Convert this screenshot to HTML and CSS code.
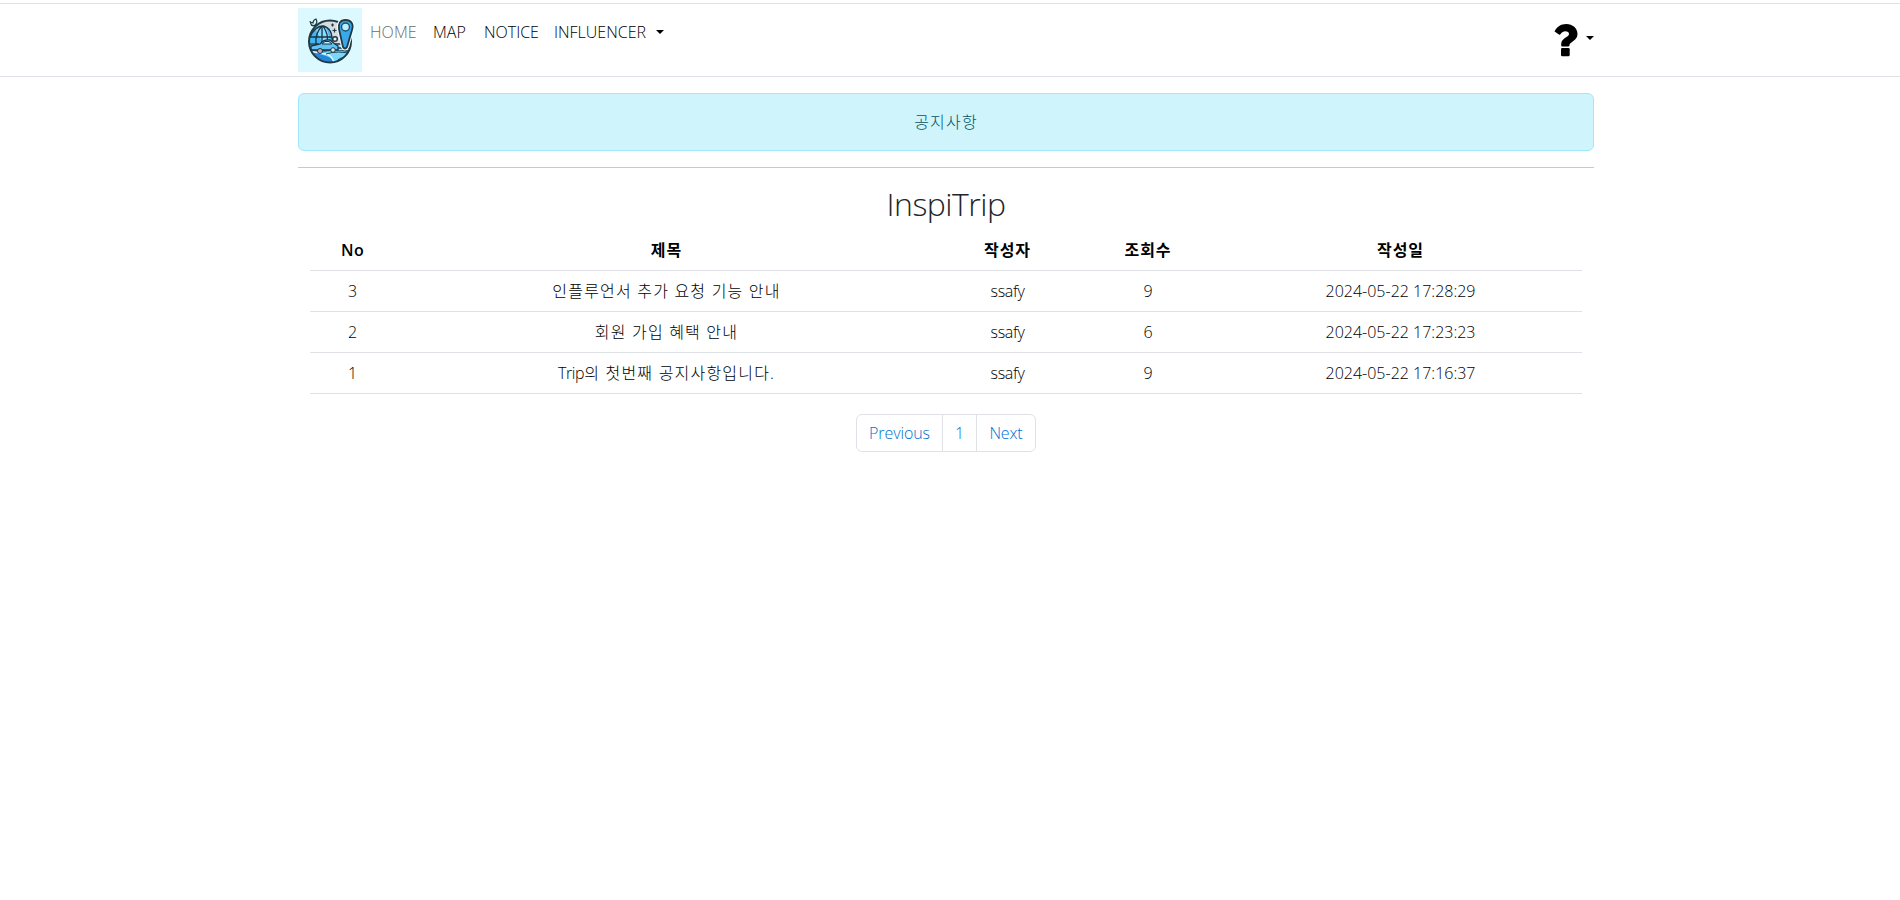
FILE: index.html
```html
<!DOCTYPE html>
<html lang="ko">
<head>
<meta charset="utf-8">
<title>InspiTrip</title>
<link rel="stylesheet" href="styles.css">
</head>
<body>
<header class="navbar">
  <div class="container nav-inner">
    <a class="logo" aria-label="InspiTrip">
      <svg width="64" height="64" viewBox="0 0 64 64">
        <defs><clipPath id="disc"><circle cx="32" cy="33.500" r="21"/></clipPath></defs>
        <rect width="64" height="64" fill="#dbf9ff"/>
        <circle cx="32" cy="33.500" r="21" fill="#d5dbe0"/>
        <g clip-path="url(#disc)">
          <path d="M10 36V28Q16 17 24 17T34 35V39H10Z" fill="#44b4f3"/>
          <path d="M17 20Q24 15 27 18T32 34H24Z" fill="#8bd9ff"/>
          <path d="M9 35H55V48H9Z" fill="#a6e4fa"/>
          <path d="M10 36H21M36 36H55M35 40H55M10 43H55" stroke="#193b4b" stroke-width="1.600"/>
          <path d="M9 42Q20 44 30 43T55 45V56H9Z" fill="#2486d8"/>
          <path d="M21 46Q38 39 54 46Q43 50 36 55Q36 49 21 46Z" fill="#7bd7fa"/>
          <path d="M9 43Q22 45 28 46T36 55" fill="none" stroke="#e4faff" stroke-width="1.400"/>
          <path d="M28 46Q40 42 54 46M38 54Q41 49 51 49" fill="none" stroke="#17435d"/>
        </g>
        <path d="M12 29Q17 18 25 18Q35 20 34 35M24 18V35M24 18Q17 25 18 36M25 18Q31 27 29 33M12 29H34" fill="none" stroke="#173442" stroke-width="1.300"/>
        <path d="M13 38L22 36Q26 31 32 32L37 36L40 38V42H13Z" fill="#63c4f4" stroke="#173442" stroke-width="1.300"/>
        <path d="M24 36L27 33.500H31L34 36Z" fill="#c6f3ff" stroke="#173442"/>
        <circle cx="22" cy="43" r="2.500" fill="#c6aeb4" stroke="#173442"/><circle cx="35" cy="42" r="2.300" fill="#dcedf2" stroke="#173442"/>
        <circle cx="32" cy="33.500" r="21" fill="none" stroke="#213943" stroke-width="2"/>
        <path d="M47.500 12C42 12 40 16 41 21L45 39Q47 42 49 39L54 22C56 16 53 12 47.500 12Z" fill="#3ca8ec" stroke="#eefcff" stroke-width="4"/>
        <path d="M47.500 12C42 12 40 16 41 21L45 39Q47 42 49 39L54 22C56 16 53 12 47.500 12Z" fill="#3ca8ec" stroke="#213943" stroke-width="1.800"/>
        <circle cx="47.500" cy="19" r="4" fill="#bdf0ff" stroke="#1d526c" stroke-width="1.500"/>
        <circle cx="37" cy="31" r="2.300" fill="#e5f6fa" stroke="#213943" stroke-width="1.500"/>
        <path d="M33 17H36M34.500 15.500V18.500M34.500 22.500H38.500M36.500 20.500V24.500" stroke="#213943" stroke-width="1.200"/>
        <path d="M12 13Q13 19 17 17Q20 15 18 11Q15 12 15 15L12 14M13 17Q16 19 19 17" fill="none" stroke="#213943" stroke-width="1.200"/>
      </svg>
    </a>
    <nav class="links">
      <a class="home">HOME</a><a class="map">MAP</a><a class="notice">NOTICE</a><a class="influencer">INFLUENCER<i class="caret"></i></a>
    </nav>
    <a class="help" aria-label="Help">
      <svg width="24" height="33" viewBox="0 0 24 33"><path d="M.5 7.500C3 2.700 6.800 0 12.300 0C18.600 0 23.500 4.300 23.500 9.700C23.500 13.600 21.400 15.500 18.700 17.500C16.200 19.300 15.500 19.900 15.500 21.300C15.500 22 15 22.500 14.300 22.500H8.500C7.700 22.500 7.200 22 7.200 21.200V20.500C7.200 16.700 9.300 15 11.800 13.400C13.900 12.100 15 11.400 15 9.900C15 8.200 13.400 7.200 11.400 7.200C9.200 7.200 8.100 8.100 6.600 10.100C6.100 10.800 5.500 10.900 4.900 10.500L1 7.800Z"/><rect x="7" y="24" width="8.700" height="8.200" rx="1.200"/></svg>
      <i class="caret"></i>
    </a>
  </div>
</header>
<main class="container">
  <div class="alert">공지사항</div>
  <hr class="rule">
  <section class="board">
    <h2 class="title">InspiTrip</h2>
    <table class="posts">
      <colgroup><col class="c-no"><col class="c-subject"><col class="c-author"><col class="c-hits"><col class="c-date"></colgroup>
      <thead><tr><th class="latin">No</th><th>제목</th><th>작성자</th><th>조회수</th><th>작성일</th></tr></thead>
      <tbody>
        <tr><td class="latin">3</td><td>인플루언서 추가 요청 기능 안내</td><td class="latin">ssafy</td><td class="latin">9</td><td class="date">2024-05-22 17:28:29</td></tr>
        <tr><td class="latin">2</td><td>회원 가입 혜택 안내</td><td class="latin">ssafy</td><td class="latin">6</td><td class="date">2024-05-22 17:23:23</td></tr>
        <tr><td class="latin">1</td><td><span class="latin">Trip</span>의 첫번째 공지사항입니다.</td><td class="latin">ssafy</td><td class="latin">9</td><td class="date">2024-05-22 17:16:37</td></tr>
      </tbody>
    </table>
    <div class="pagination"><a class="prev">Previous</a><a class="page">1</a><a class="next">Next</a></div>
  </section>
</main>
</body>
</html>
```
FILE: styles.css
```css
* { box-sizing: border-box; }
body {
  margin: 0;
  padding-top: 3px;
  background: #fff;
  color: #212529;
  font: 300 16px/24px "Open Sans", "Noto Sans CJK KR", sans-serif;
}
.container { width: 1296px; margin-left: 298px; }
.navbar { height: 74px; border-top: 1px solid #dee2e6; border-bottom: 1px solid #dee2e6; }
.nav-inner { display: flex; padding-top: 4px; }
.logo { width: 64px; height: 64px; }
.logo svg, .help svg { display: block; }
.links { display: flex; gap: 16px; padding: 12px 0 0 8px; color: #000; white-space: nowrap; }
.home { width: 47px; color: #6c6c6c; letter-spacing: .1px; }
.map { width: 34px; margin-right: 1px; letter-spacing: 0; }
.notice { width: 54px; letter-spacing: 0; }
.influencer { letter-spacing: 0; }
.caret { display: inline-block; border: 4px solid transparent; border-top-color: #000; border-bottom: 0; }
.influencer .caret { margin-left: 10px; vertical-align: 4px; }
.help { display: flex; margin-left: auto; padding-top: 16px; gap: 8px; }
.help .caret { margin-top: 12px; }
.alert {
  height: 58px;
  margin-top: 16px;
  padding: 16px;
  border: 1px solid #9eeaf9;
  border-radius: 6px;
  background: #cff4fc;
  color: #055160;
  text-align: center;
  letter-spacing: 1.2px;
}
.rule { height: 1px; margin: 16px 0; border: 0; background: #c7c8c9; }
.board { padding: 1px 12px 0; }
.title { margin: 0 0 7px; font-size: 32px; font-weight: 350; line-height: 38px; text-align: center; letter-spacing: -.5px; }
.posts { width: 1272px; table-layout: fixed; border-collapse: collapse; color: #000; text-align: center; }
.c-no { width: 85px; }
.c-subject { width: 543px; }
.c-author { width: 139px; }
.c-hits { width: 142px; }
.c-date { width: 363px; }
.posts th, .posts td { height: 41px; padding: 8px; border-bottom: 1px solid #dee2e6; letter-spacing: 1.2px; white-space: nowrap; }
.posts th { height: 40px; padding: 8px 8px 7px; font-weight: 600; letter-spacing: 1px; }
.posts .latin { letter-spacing: -.35px; }
.posts th.latin { letter-spacing: .3px; }
.posts .date { letter-spacing: 0; }
.pagination {
  display: flex;
  width: 180px;
  height: 38px;
  margin: 20px auto 0;
  border: 1px solid #dee2e6;
  border-radius: 6px;
  color: #006fd0;
  text-align: center;
  line-height: 36px;
  letter-spacing: -.1px;
}
.prev { width: 85px; }
.page { width: 35px; border: solid #dee2e6; border-width: 0 1px; }
.next { flex: 1; }
```
